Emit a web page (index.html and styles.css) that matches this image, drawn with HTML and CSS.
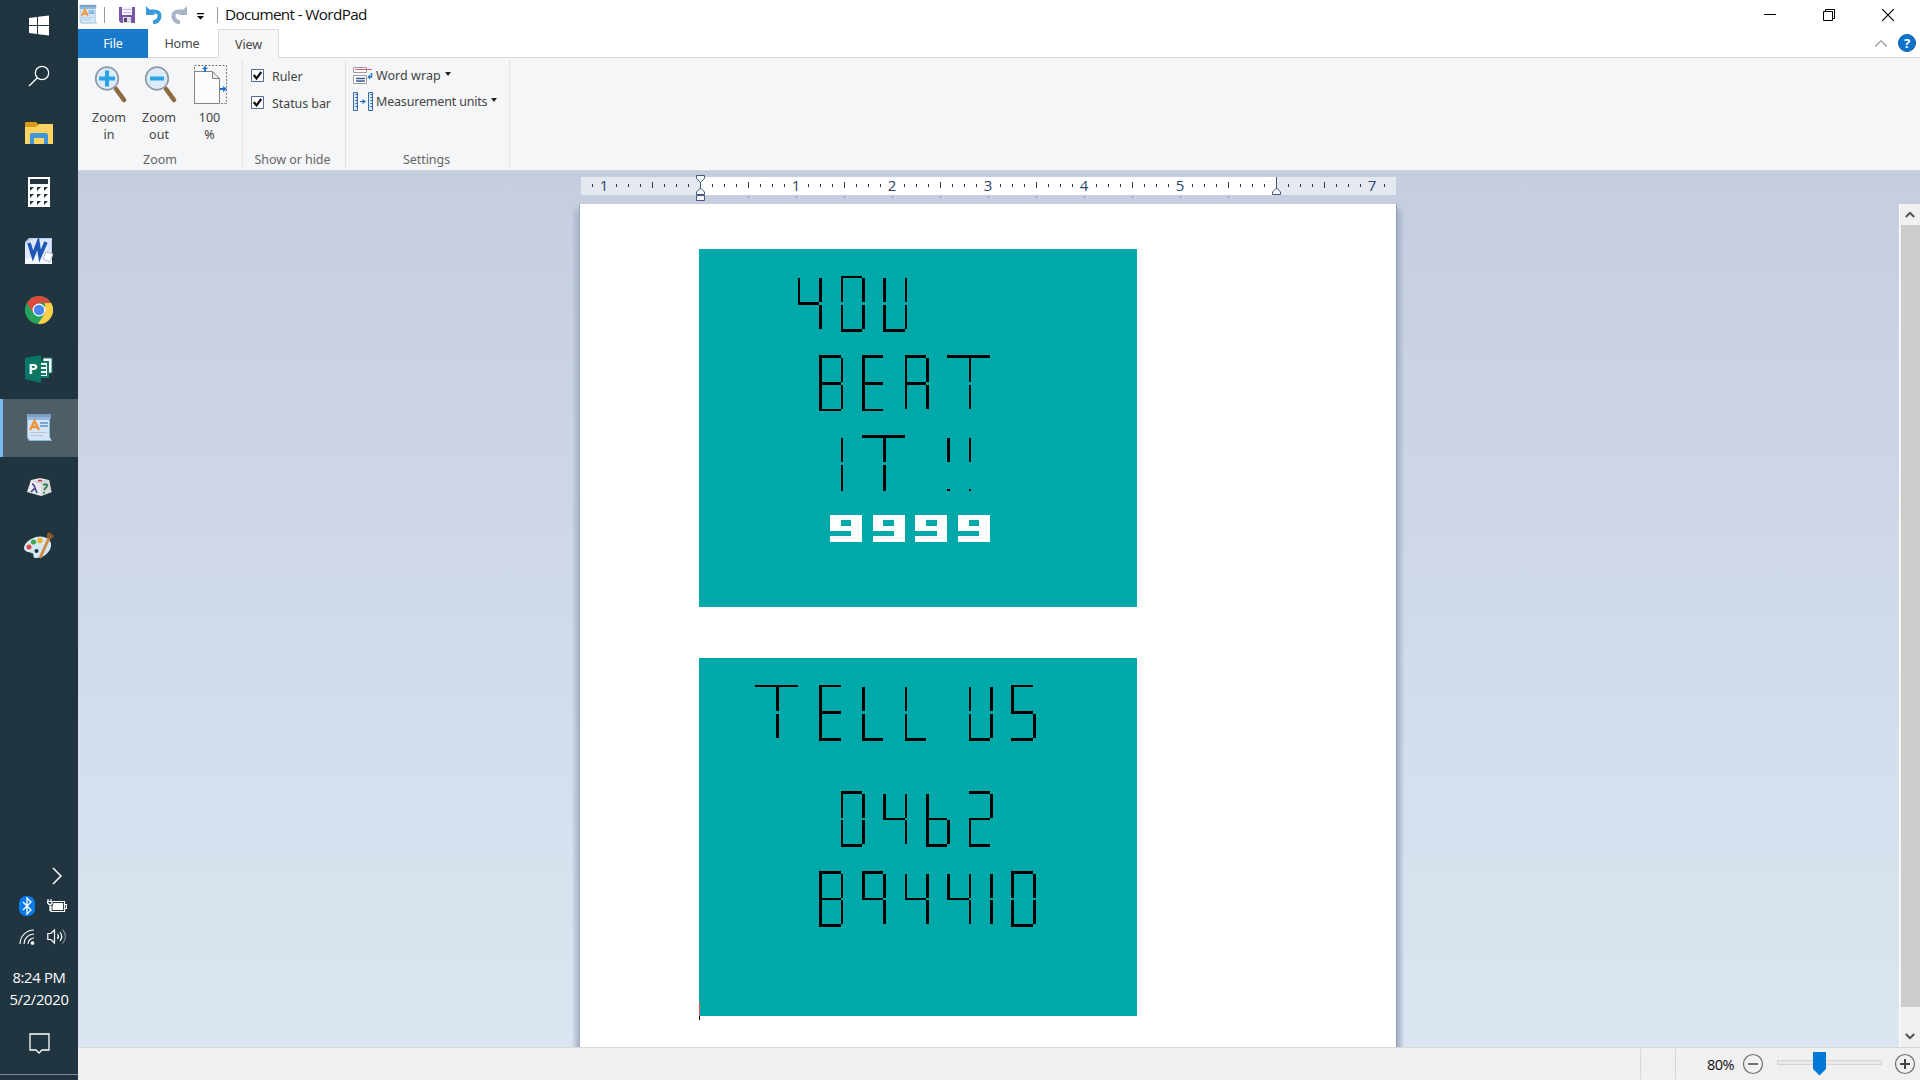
FILE: index.html
```html
<!DOCTYPE html>
<html lang="en">
<head>
<meta charset="utf-8">
<title>Document - WordPad</title>
<link rel="stylesheet" href="styles.css">
</head>
<body>
<div class="desktop">
  <nav class="taskbar">
    <div class="task start"><svg width="20" height="21" viewBox="0 0 20 21"><path fill="#fff" d="M0 3l8-1v8H0zM9 1.8L20 .4V10H9zM0 11h8v8l-8-1zM9 11h11v9.600l-11-1.400z"/></svg></div>
    <div class="task search"><svg width="22" height="22" viewBox="0 0 22 22" fill="none" stroke="#fff" stroke-width="1.300"><circle cx="14" cy="8" r="6.700"/><path d="M9.200 13L1 21"/></svg></div>
    <div class="task"><svg width="28" height="24" viewBox="0 0 28 24"><path fill="#d99a12" d="M0 2q0-1 1-1h10l3 3v5H0z"/><path fill="#fdd361" d="M0 6h11l3-3h14v20H0z"/><path fill="#3d97d9" d="M5 23v-9q0-2 2-2h14q2 0 2 2v9h-4v-6H9v6z"/></svg></div>
    <div class="task"><svg width="22" height="30" viewBox="0 0 22 30"><path fill="#fff" d="M0 0h22v30H0z"/><path fill="#20343f" d="M2 2h18v5H2zM2 10h4l-4 4zM9 10h4l-4 4zM16 10h4l-4 4zM2 17h4l-4 4zM9 17h4l-4 4zM16 17h4l-4 4zM2 24h4l-4 4zM9 24h4l-4 4zM16 24h4l-4 4z"/></svg></div>
    <div class="task"><svg width="28" height="28" viewBox="0 0 28 28"><path fill="#b9cdf0" d="M4 1h23v26H0V5z"/><path fill="#dce7fa" d="M7 2h19v14L0 25V8z"/><path fill="#f5f8ff" d="M0 27V22l22-6 5 2v9z"/><path fill="none" stroke="#1d56b4" stroke-width="3.600" d="M4 6l4 13 5-13 2 13L21 5"/><path fill="#fff" stroke="#a9bce0" d="M21 15l7 2-3 8-7-3z"/></svg></div>
    <div class="task"><svg width="28" height="28" viewBox="0 0 28 28"><circle cx="14" cy="14" r="14" fill="#25a35b"/><path fill="#dc4a3e" d="M1.900 7A14 14 0 0 1 26.100 7H14l-6 10z"/><path fill="#fdd047" d="M26.100 7A14 14 0 0 1 13 28l7-11V7z"/><circle cx="14" cy="14" r="6.400" fill="#fff"/><circle cx="14" cy="14" r="5.200" fill="#4a86f0"/></svg></div>
    <div class="task"><svg width="28" height="28" viewBox="0 0 28 28"><path fill="#fff" stroke="#0f7a68" d="M18 3h9v15h-9z"/><path fill="#fff" stroke="#0f7a68" stroke-width="2" d="M14 7h9v15h-9z"/><path stroke="#0f7a68" stroke-width="2" d="M16 11h5M16 15h5M16 19h5"/><path fill="#0a7664" d="M0 3l16-3v28L0 24z"/></svg><span class="publetter">P</span></div>
    <div class="task active"><svg width="26" height="28" viewBox="0 0 26 28"><use href="#wordpad"/></svg></div>
    <div class="task"><svg width="25" height="18" viewBox="0 0 25 18"><path fill="#e9e9f0" d="M4 2l9-2 9 2 2.500 12L14 18 0 14z"/><path fill="#c9cbd8" d="M5 3l17-1-8 4z"/><path fill="#d5dbd9" d="M14 6l8-4 2.500 12L14 18z"/><path stroke="#c33" stroke-width="1.500" d="M11 2.500h4"/><path fill="none" stroke="#3c3c8c" stroke-width="1.500" d="M5 6q2 0 3 4l2 5M8 10l-4 4"/><path fill="none" stroke="#2b7550" stroke-width="1.800" d="M16 7q5-2 4 1l-3 4M17 14v1.500"/></svg></div>
    <div class="task"><svg width="30" height="28" viewBox="0 0 30 28"><path fill="#d7e8f5" d="M12 5C20 3 28 7 27 14s-9 13-16 12c-3-1 0-4-3-5S0 20 0 16 5 7 12 5z"/><circle cx="12.500" cy="19" r="2" fill="#20343f"/><circle cx="5" cy="15" r="2.500" fill="#d9493c"/><circle cx="9.500" cy="10" r="2.600" fill="#43a54b"/><circle cx="16" cy="8.500" r="2.700" fill="#edb42b"/><path stroke="#d08a45" stroke-width="3" d="M16 26l9-20"/><path fill="#8b5a30" d="M23 2l2-2 5 4-3 3-4-1z"/></svg></div>
    <div class="spacer"></div>
    <div class="tray">
      <div class="tray-row more"><svg width="10" height="18" viewBox="0 0 10 18" fill="none" stroke="#fff" stroke-width="1.500"><path d="M1 1l8 8-8 8"/></svg></div>
      <div class="tray-row"><svg width="16" height="20" viewBox="0 0 16 20"><rect width="16" height="20" rx="7" fill="#0a7bed"/><path fill="none" stroke="#fff" stroke-width="1.300" d="M4 6l8 8-4 4V2l4 4-8 8"/></svg>
      <svg width="20" height="14" viewBox="0 0 20 14"><path fill="none" stroke="#fff" stroke-width="1.200" d="M6 2.500h11.500v10H4V7M18 5.500h1.500v4H18M1 0v2M4 0v2M0 2.500h5v2q-2 2-4 0zM3 6v6"/><path fill="#fff" d="M6.500 4H16v7H5.500V7z"/></svg></div>
      <div class="tray-row"><svg width="16" height="16" viewBox="0 0 16 16" fill="none" stroke="#fff" stroke-width="1.100"><path d="M1 15A14 14 0 0 1 15 1"/><path d="M5 15A10 10 0 0 1 15 5M9 15A6 6 0 0 1 15 9"/><circle cx="13.500" cy="14" r="1.300" fill="#fff"/></svg>
      <svg width="20" height="17" viewBox="0 0 20 17" fill="none" stroke="#fff" stroke-width="1.200"><path d="M.8 5.500h3L7.500 2v13l-3.700-3.500h-3zM10.500 6q2 2.500 0 5M13 4q3.500 4.500 0 9"/><path opacity=".4" d="M15.500 1.500q6 7 0 14"/></svg></div>
    </div>
    <div class="clock"><span>8:24 PM</span><span>5/2/2020</span></div>
    <div class="notify"><svg width="21" height="21" viewBox="0 0 21 21" fill="none" stroke="#fff" stroke-width="1.300"><path d="M1 1h19v16h-7l-3 3-3-3H1z"/></svg></div>
  </nav>

  <main class="window">
    <header class="titlebar">
      <svg class="app" width="18" height="21" viewBox="0 0 26 28"><g id="wordpad"><path fill="#7d9fc0" d="M1 0h24v5H1z"/><path fill="#8fb8dc" d="M1 3h23v20l2 4H3l-2-3z"/><path fill="#d4e5f5" d="M2 6h21v15q0 3 2 5H4q-2-1-2-4z"/><path fill="none" stroke="#ee9438" stroke-width="2.400" d="M4 16l4.500-9L13 16M6 13h5"/><path stroke="#5b8fce" stroke-width="1.500" d="M14 9h8M14 12h8"/><path stroke="#b4c2d2" d="M4 18.500h17M4 21.500h13"/></g></svg>
      <i class="bar bar-a"></i>
      <svg class="save" width="16" height="16" viewBox="0 0 16 16"><path fill="#7a57aa" d="M0 0h16v16H2l-2-2z"/><path fill="#f6f2fb" d="M3 0h10v8H3z"/><path stroke="#c6b8dc" d="M4 2.500h8M4 5.500h8"/><path fill="#ddd" d="M4 10h8v6H4z"/><path fill="#56407c" d="M5 11h3v4H5z"/></svg>
      <svg class="undo" width="16" height="18" viewBox="0 0 16 18"><path fill="none" stroke="#3a9bdb" stroke-width="4" d="M4 5.500h4q6 0 5.500 5T7 16.500"/><path fill="#3a9bdb" d="M0 0v9h9L6.500 6.500z"/></svg>
      <svg class="redo" width="16" height="18" viewBox="0 0 16 18"><path fill="none" stroke="#a9b4c8" stroke-width="4" d="M12 5.500H8q-6 0-5.500 5T9 16.500"/><path fill="#a9b4c8" d="M16 0v9H7l2.500-2.500z"/></svg>
      <svg class="qat" width="7" height="7" viewBox="0 0 7 7"><path d="M0 0h7v1.200H0zM0 3h7L3.500 6.500z"/></svg>
      <i class="bar bar-b"></i>
      <h1 class="title">Document - WordPad</h1>
      <div class="controls">
        <svg width="12" height="12" viewBox="0 0 12 12"><path d="M0 5h12v1H0z"/></svg>
        <svg width="12" height="12" viewBox="0 0 12 12" fill="none" stroke="#000"><path d="M.5 2.500h9v9h-9zM2.500 2.500v-2h9v9h-2"/></svg>
        <svg width="12" height="12" viewBox="0 0 12 12" stroke="#000" stroke-width="1.200"><path d="M0 0l12 12M12 0L0 12"/></svg>
      </div>
    </header>

    <div class="tabs">
      <div class="tab file">File</div>
      <div class="tab home">Home</div>
      <div class="tab view">View</div>
      <div class="tab-fill">
        <svg width="12" height="7" viewBox="0 0 12 7" fill="none" stroke="#a0a0a0" stroke-width="1.300"><path d="M0 6.500L6 .8l6 5.700"/></svg>
        <span class="help">?</span>
      </div>
    </div>

    <section class="ribbon">
      <div class="group g-zoom">
        <div class="group-body zooms">
          <div class="big"><svg width="34" height="39" viewBox="0 0 34 39"><path stroke="#8d6840" stroke-width="4.600" stroke-linecap="round" d="M22 24l8 11"/><circle cx="13" cy="13.500" r="11.300" fill="#dcebfa" stroke="#8e98a6" stroke-width="1.700"/><path stroke="#29a3e4" stroke-width="4" d="M5 13.500h16M13 5.500v16"/></svg><span>Zoom<br>in</span></div>
          <div class="big"><svg width="34" height="39" viewBox="0 0 34 39"><path stroke="#8d6840" stroke-width="4.600" stroke-linecap="round" d="M22 24l8 11"/><circle cx="13" cy="13.500" r="11.300" fill="#dcebfa" stroke="#8e98a6" stroke-width="1.700"/><path stroke="#29a3e4" stroke-width="4" d="M6 13.500h14"/></svg><span>Zoom<br>out</span></div>
          <div class="big"><svg width="34" height="39" viewBox="0 0 34 39"><path fill="none" stroke="#777" stroke-dasharray="2 1.500" d="M.5.500h32v38H.5z"/><path fill="#fcfcfc" stroke="#858585" d="M.5 6.500h18l7 7v25H.5z"/><path fill="#eee" stroke="#858585" d="M18.500 6.500v7h7z"/><path fill="#1b73cf" d="M11 1l-3 3h2v3h2V4h2zM33 24l-4-3v2h-3v2h3v2z"/></svg><span>100<br>%</span></div>
        </div>
        <div class="group-label">Zoom</div>
      </div>
      <div class="group g-show">
        <div class="group-body checks">
          <div class="check"><svg width="13" height="13" viewBox="0 0 13 13"><path fill="#fff" stroke="#53689b" d="M.5.500h12v12H.5z"/><path fill="none" stroke="#111" stroke-width="2.200" d="M2.800 6l2.700 3.500L10.300 3"/></svg><span>Ruler</span></div>
          <div class="check"><svg width="13" height="13" viewBox="0 0 13 13"><path fill="#fff" stroke="#53689b" d="M.5.500h12v12H.5z"/><path fill="none" stroke="#111" stroke-width="2.200" d="M2.800 6l2.700 3.500L10.300 3"/></svg><span>Status bar</span></div>
        </div>
        <div class="group-label">Show or hide</div>
      </div>
      <div class="group g-set">
        <div class="group-body settings">
          <div class="setting"><svg width="20" height="18" viewBox="0 0 20 18"><path fill="#fff" stroke="#9a9da3" d="M.5.500h13v5H.5zM.5 8.500h13v8H.5z"/><path stroke="#d66368" d="M2 2.500h17"/><path stroke="#3d5a94" stroke-width="1.500" d="M3 11.500h9M3 14h9"/><path fill="none" stroke="#2474c6" stroke-width="1.500" d="M18.500 6v4h-2"/><path fill="#2474c6" d="M17 7.500v5l-2.500-2.500z"/></svg><span>Word wrap</span><b class="caret"></b></div>
          <div class="setting units"><svg width="20" height="19" viewBox="0 0 20 19"><path fill="#d8e9f8" stroke="#3c6fa6" d="M.5.500h4v18h-4zM15.500.500h4v18h-4z"/><path stroke="#285a92" stroke-dasharray="1 2" stroke-width="2" d="M3.500 2v15M18.500 2v15"/><path fill="#1b73cf" d="M7 9h2.500V7l3.500 2.500-3.500 2.500v-2H7z"/></svg><span>Measurement units</span><b class="caret"></b></div>
        </div>
        <div class="group-label">Settings</div>
      </div>
    </section>

    <section class="workspace">
      <div class="canvas">
        <svg class="ruler" width="815" height="34" viewBox="0 0 815 34">
          <defs><pattern id="ticks" x="119" y="0" width="96" height="18" patternUnits="userSpaceOnUse"><path fill="#2a3a50" d="M12 8h1v3h-1zM24 8h1v3h-1zM36 8h1v3h-1zM48 6h1v6h-1zM60 8h1v3h-1zM72 8h1v3h-1zM84 8h1v3h-1z"/></pattern>
          <pattern id="stops" x="119" y="0" width="48" height="34" patternUnits="userSpaceOnUse"><path fill="#8d9ab2" d="M0 19h1v2H0z"/></pattern></defs>
          <path fill="#e3e8f1" d="M0 6h815v18H0z"/><path fill="#fff" d="M119 6h576v18H119z"/>
          <g transform="translate(0 5)"><path fill="url(#ticks)" d="M0 0h815v18H0z"/></g>
          <g transform="translate(0 6)"><path fill="url(#stops)" d="M160 0h500v28H160z"/></g>
          <g class="nums"><text x="23" y="20">1</text><text x="215" y="20">1</text><text x="311" y="20">2</text><text x="407" y="20">3</text><text x="503" y="20">4</text><text x="599" y="20">5</text><text x="791" y="20">7</text></g>
          <g fill="#f4f7fb" stroke="#455a78"><path d="M115.500 4.500h8v3l-4 4-4-4zM119.500 11v7M115.500 23.500v-2.500l4-4 4 4v2.500zM115.500 24.500h8v5h-8zM695.500 6v12M691.500 23.500v-2.500l4-4 4 4v2.500z"/></g>
        </svg>
        <article class="page">
          <svg class="shot" role="img" aria-label="YOU BEAT IT !! 9999" width="438" height="358" viewBox="27 27 1314 1074" shape-rendering="crispEdges">
            <g>
              <rect x="324" y="114" width="6" height="81"/><rect x="324" y="186" width="63" height="9"/><rect x="387" y="114" width="9" height="72"/><rect x="387" y="195" width="9" height="72"/>
              <rect x="453" y="108" width="63" height="6"/><rect x="453" y="108" width="6" height="78"/><rect x="516" y="114" width="9" height="72"/><rect x="453" y="195" width="6" height="81"/><rect x="516" y="195" width="9" height="72"/><rect x="453" y="267" width="63" height="9"/>
              <rect x="579" y="114" width="9" height="72"/><rect x="645" y="114" width="6" height="72"/><rect x="579" y="195" width="9" height="81"/><rect x="645" y="195" width="6" height="72"/><rect x="579" y="267" width="66" height="9"/>
            </g>
            <g>
              <rect x="387" y="345" width="9" height="168"/><rect x="387" y="345" width="66" height="9"/><rect x="387" y="426" width="66" height="9"/><rect x="387" y="507" width="66" height="6"/><rect x="453" y="354" width="6" height="72"/><rect x="453" y="435" width="6" height="72"/>
              <rect x="516" y="345" width="9" height="168"/><rect x="516" y="345" width="63" height="9"/><rect x="516" y="426" width="63" height="9"/><rect x="516" y="507" width="63" height="6"/>
              <rect x="645" y="345" width="6" height="162"/><rect x="645" y="345" width="63" height="9"/><rect x="645" y="426" width="63" height="9"/><rect x="708" y="354" width="9" height="72"/><rect x="708" y="435" width="9" height="72"/>
              <rect x="771" y="345" width="129" height="9"/><rect x="837" y="354" width="6" height="72"/><rect x="837" y="435" width="6" height="72"/>
            </g>
            <g>
              <rect x="453" y="594" width="6" height="72"/><rect x="453" y="675" width="6" height="78"/>
              <rect x="516" y="585" width="129" height="9"/><rect x="579" y="594" width="9" height="72"/><rect x="579" y="675" width="9" height="78"/>
              <rect x="771" y="594" width="9" height="72"/><rect x="771" y="747" width="9" height="6"/><rect x="837" y="594" width="6" height="72"/><rect x="837" y="747" width="6" height="6"/>
            </g>
            <g class="score"><rect x="420" y="825" width="96" height="81"/><rect x="549" y="825" width="96" height="81"/><rect x="675" y="825" width="96" height="81"/><rect x="804" y="825" width="96" height="81"/></g>
            <g class="notch"><rect x="453" y="840" width="30" height="18"/><rect x="420" y="873" width="63" height="15"/><rect x="579" y="840" width="33" height="18"/><rect x="549" y="873" width="63" height="15"/><rect x="708" y="840" width="33" height="18"/><rect x="675" y="873" width="66" height="15"/><rect x="837" y="840" width="30" height="18"/><rect x="804" y="873" width="63" height="15"/></g>
          </svg>
          <svg class="shot" role="img" aria-label="TELL US 0462 894410" width="438" height="358" viewBox="27 24 1314 1074" shape-rendering="crispEdges">
            <g>
              <rect x="195" y="105" width="129" height="6"/><rect x="258" y="111" width="9" height="72"/><rect x="258" y="192" width="9" height="72"/>
              <rect x="387" y="105" width="9" height="168"/><rect x="387" y="105" width="66" height="6"/><rect x="387" y="183" width="66" height="9"/><rect x="387" y="264" width="66" height="9"/>
              <rect x="516" y="111" width="9" height="72"/><rect x="516" y="192" width="9" height="81"/><rect x="516" y="264" width="63" height="9"/>
              <rect x="645" y="111" width="6" height="72"/><rect x="645" y="192" width="6" height="81"/><rect x="645" y="264" width="63" height="9"/>
              <rect x="837" y="111" width="6" height="72"/><rect x="900" y="111" width="9" height="72"/><rect x="837" y="192" width="6" height="81"/><rect x="900" y="192" width="9" height="72"/><rect x="837" y="264" width="63" height="9"/>
              <rect x="963" y="105" width="66" height="6"/><rect x="963" y="105" width="9" height="87"/><rect x="963" y="183" width="66" height="9"/><rect x="1029" y="192" width="9" height="72"/><rect x="963" y="264" width="66" height="9"/>
            </g>
            <g>
              <rect x="453" y="423" width="63" height="9"/><rect x="453" y="423" width="6" height="81"/><rect x="516" y="432" width="9" height="72"/><rect x="453" y="510" width="6" height="81"/><rect x="516" y="510" width="9" height="72"/><rect x="453" y="582" width="63" height="9"/>
              <rect x="579" y="432" width="9" height="78"/><rect x="579" y="504" width="66" height="6"/><rect x="645" y="432" width="6" height="72"/><rect x="645" y="510" width="6" height="72"/>
              <rect x="708" y="432" width="9" height="159"/><rect x="708" y="504" width="63" height="6"/><rect x="771" y="510" width="9" height="72"/><rect x="708" y="582" width="63" height="9"/>
              <rect x="837" y="423" width="63" height="9"/><rect x="900" y="432" width="9" height="72"/><rect x="837" y="504" width="63" height="6"/><rect x="837" y="504" width="6" height="87"/><rect x="837" y="582" width="63" height="9"/>
            </g>
            <g>
              <rect x="387" y="663" width="9" height="168"/><rect x="387" y="663" width="66" height="9"/><rect x="387" y="744" width="66" height="6"/><rect x="387" y="822" width="66" height="9"/><rect x="453" y="672" width="6" height="72"/><rect x="453" y="750" width="6" height="72"/>
              <rect x="516" y="663" width="9" height="87"/><rect x="516" y="663" width="63" height="9"/><rect x="516" y="744" width="63" height="6"/><rect x="579" y="672" width="9" height="72"/><rect x="579" y="750" width="9" height="72"/>
              <rect x="645" y="672" width="6" height="78"/><rect x="645" y="744" width="63" height="6"/><rect x="708" y="672" width="9" height="72"/><rect x="708" y="750" width="9" height="72"/>
              <rect x="771" y="672" width="9" height="78"/><rect x="771" y="744" width="66" height="6"/><rect x="837" y="672" width="6" height="72"/><rect x="837" y="750" width="6" height="72"/>
              <rect x="900" y="672" width="9" height="72"/><rect x="900" y="750" width="9" height="72"/>
              <rect x="963" y="663" width="66" height="9"/><rect x="963" y="663" width="9" height="81"/><rect x="1029" y="672" width="9" height="72"/><rect x="963" y="750" width="9" height="81"/><rect x="1029" y="750" width="9" height="72"/><rect x="963" y="822" width="66" height="9"/>
            </g>
            <rect class="caret-top" x="27" y="1056" width="3" height="42"/>
          </svg>
          <i class="cursor"></i>
        </article>
      </div>
      <div class="scrollbar">
        <svg width="10" height="7" viewBox="0 0 10 7" fill="none" stroke="#505050" stroke-width="2"><path d="M.8 6L5 1.800 9.200 6"/></svg>
        <i class="thumb"></i>
        <svg width="10" height="7" viewBox="0 0 10 7" fill="none" stroke="#505050" stroke-width="2"><path d="M.8 1L5 5.200 9.200 1"/></svg>
      </div>
    </section>

    <footer class="status">
      <i class="cell"></i><i class="cell"></i>
      <span class="percent">80%</span>
      <svg width="22" height="22" viewBox="0 0 22 22"><circle cx="11" cy="11" r="9.500" fill="#f1f1f1" stroke="#707070" stroke-width="1.200"/><path stroke="#444" stroke-width="1.500" d="M6 11h10"/></svg>
      <div class="slider"><svg width="105" height="24" viewBox="0 0 105 24"><path fill="#e7eaea" stroke="#d2d2d2" d="M.5 8.500h104v4H.5z"/><path fill="#0078d7" d="M36 0h13v17l-6.500 6.500L36 17z"/></svg></div>
      <svg width="22" height="22" viewBox="0 0 22 22"><circle cx="11" cy="11" r="9.500" fill="#f1f1f1" stroke="#707070" stroke-width="1.200"/><path stroke="#444" stroke-width="2" d="M6 11h10M11 6v10"/></svg>
    </footer>
  </main>
</div>
</body>
</html>
```
FILE: styles.css
```css
* { box-sizing: border-box; }
body { margin: 0; overflow: hidden; font-family: "Noto Sans", "Open Sans", sans-serif; font-size: 12.5px; color: #444; }
svg { display: block; flex: none; }
.desktop { display: flex; width: 1920px; height: 1080px; }

.taskbar { width: 78px; flex: none; display: flex; flex-direction: column; background: #20353f; color: #fff; }
.task { height: 59px; flex: none; display: grid; place-items: center; }
.task > * { grid-area: 1 / 1; }
.task.start { height: 50px; }
.task.search { height: 51px; margin-bottom: 2px; }
.task.active { height: 58px; margin-top: 1px; background: #4d5e66; border-left: 3px solid #76b9ed; padding-right: 3px; }
.publetter { font: bold 15px/1 "Open Sans", sans-serif; margin-right: 12px; }
.spacer { flex: 1; }
.tray-row { display: flex; align-items: center; justify-content: space-between; height: 31px; padding: 0 11px 0 19px; }
.tray-row.more { height: 29px; justify-content: flex-end; padding-right: 16px; }
.clock { display: flex; flex-direction: column; align-items: center; margin-top: 14px; font: 14.8px/22px "Open Sans", sans-serif; letter-spacing: -0.3px; }
.notify { height: 65px; margin-bottom: 5px; border-bottom: 1px solid #7c8b92; display: flex; justify-content: center; padding-top: 23px; }

.window { flex: 1; min-width: 0; display: flex; flex-direction: column; background: #fff; }
.titlebar { height: 29px; flex: none; display: flex; align-items: center; padding-left: 1px; }
.bar { width: 1px; height: 16px; background: #999; }
.bar-a { margin: 0 14px 0 7px; }
.undo { margin-left: 11px; }
.redo { margin: 0 10px 0 9px; }
.qat { margin-top: 3px; }
.bar-b { margin: 0 7px 0 13px; }
.title { margin: 0; font: 15.3px/26px "Open Sans", sans-serif; color: #111; letter-spacing: -0.65px; padding-bottom: 2px; }
.controls { margin-left: auto; display: flex; gap: 47px; padding-right: 26px; }

.tabs { height: 29px; flex: none; display: flex; }
.tab { display: flex; align-items: center; justify-content: center; border-bottom: 1px solid #d9dadc; font-size: 12.5px; letter-spacing: -0.1px; }
.file { width: 70px; background: #1979ca; border-color: #1979ca; color: #fff; }
.home { width: 70px; padding-right: 2px; }
.view { width: 61px; background: #f5f6f7; border: 1px solid #dadbdc; border-bottom: 0; }
.tab-fill { flex: 1; border-bottom: 1px solid #d9dadc; display: flex; align-items: center; justify-content: flex-end; gap: 11px; padding-right: 4px; }
.help { width: 18px; height: 18px; border-radius: 50%; background: #0d73cc; border: 1px solid #0a5fac; color: #fff; font: bold 13px/16px "Open Sans", sans-serif; text-align: center; }

.ribbon { height: 113px; flex: none; display: flex; background: #f5f6f7; border-bottom: 1px solid #d3d6dc; padding: 2px 0; }
.group { display: flex; flex-direction: column; border-right: 1px solid #e2e3e4; }
.group-body { flex: 1; min-height: 0; }
.group-label { text-align: center; color: #666; line-height: 16px; letter-spacing: -0.05px; }
.g-zoom { width: 165px; }
.g-show { width: 103px; }
.g-show .group-label { padding-right: 3px; }
.g-set { width: 164px; }
.g-set .group-label { padding-right: 2px; }
.zooms { display: flex; padding: 5px 0 0 6px; }
.big { width: 50px; display: flex; flex-direction: column; align-items: center; text-align: center; line-height: 17px; gap: 5px; }
.big svg { margin-left: 3px; }
.big:last-child { padding-left: 1px; }
.checks { padding: 9px 0 0 8px; }
.check { display: flex; align-items: center; gap: 8px; height: 13px; margin-bottom: 14px; white-space: nowrap; }
.check span { padding-top: 2px; letter-spacing: -0.08px; }
.settings { padding: 6px 0 0 7px; }
.setting { display: flex; align-items: center; gap: 3px; height: 19px; margin-bottom: 7px; white-space: nowrap; }
.setting span { letter-spacing: 0.05px; }
.units span { letter-spacing: -0.18px; }
.caret { border: 3.5px solid transparent; border-top: 4px solid #222; border-bottom: 0; margin: -3px 0 0 1px; }

.workspace { flex: 1; min-height: 0; display: flex; background: linear-gradient(#c5cddf, #dce6f2); }
.canvas { flex: 1; display: flex; flex-direction: column; padding-left: 502px; }
.ruler { margin-left: 1px; margin-bottom: -1px; }
.nums text { font: 15px "Open Sans", sans-serif; fill: #2e4468; text-anchor: middle; }
.page { width: 816px; flex: 1; background: #fff; padding: 45px 0 0 119px; box-shadow: 1px 0 0 #8f9cb4, -1px 0 0 #9eabc2, 5px 5px 5px #a5b1c8, -5px 5px 5px #a9b5cb; clip-path: inset(0 -8px 0 -8px); }
.shot { background: #00a9a9; margin-bottom: 51px; }
.shot + .shot { margin-bottom: 0; }
.score { fill: #fff; }
.notch { fill: #00a9a9; }
.caret-top { fill: #ff5656; }
.cursor { display: block; width: 1px; height: 4px; background: #000; }
.scrollbar { width: 21px; margin-top: 33px; background: #f0f0f0; border-left: 1px solid #fff; display: flex; flex-direction: column; align-items: center; justify-content: space-between; padding: 7px 0; }
.thumb { flex: 1; width: 19px; background: #cdcdcd; margin: 7px 0 26px; }

.status { height: 33px; flex: none; border-top: 1px solid #d7d7d7; background: #f0f0f0; display: flex; align-items: center; justify-content: flex-end; padding-right: 4px; color: #111; }
.cell { width: 35px; height: 30px; border-left: 1px solid #d7d7d7; }
.percent { width: 32px; text-align: right; margin-left: -8px; margin-right: 8px; font: 14.5px "Open Sans", sans-serif; letter-spacing: -0.5px; }
.slider { margin: 0 12px 0 13px; }
```
